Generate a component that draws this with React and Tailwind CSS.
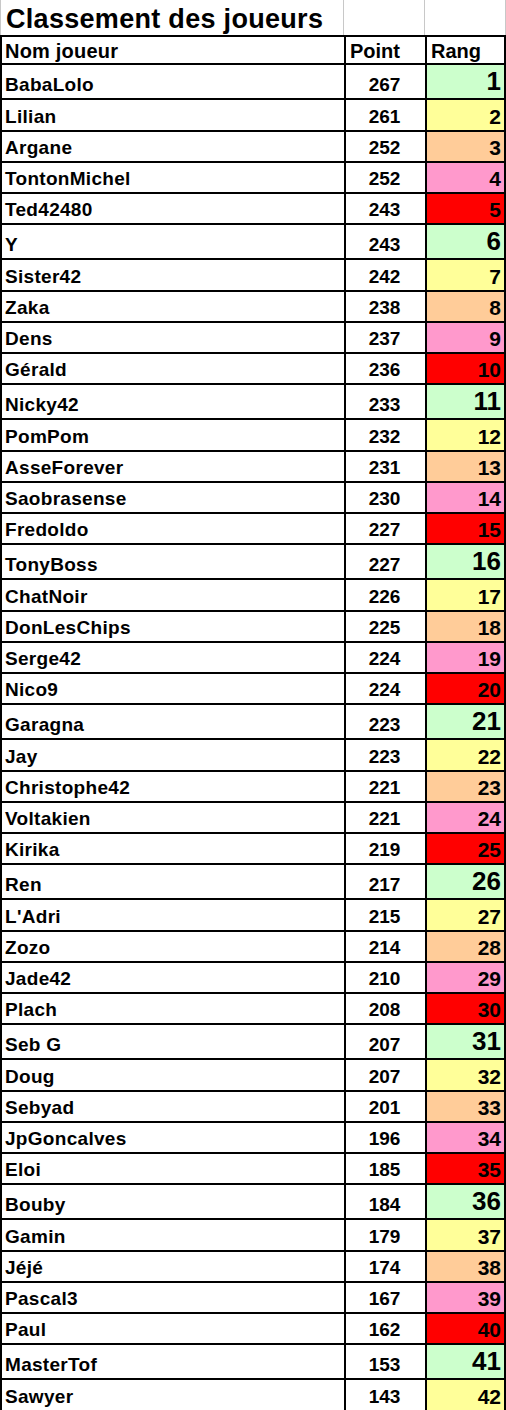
const players = [
  ["BabaLolo", 267],
  ["Lilian", 261],
  ["Argane", 252],
  ["TontonMichel", 252],
  ["Ted42480", 243],
  ["Y", 243],
  ["Sister42", 242],
  ["Zaka", 238],
  ["Dens", 237],
  ["Gérald", 236],
  ["Nicky42", 233],
  ["PomPom", 232],
  ["AsseForever", 231],
  ["Saobrasense", 230],
  ["Fredoldo", 227],
  ["TonyBoss", 227],
  ["ChatNoir", 226],
  ["DonLesChips", 225],
  ["Serge42", 224],
  ["Nico9", 224],
  ["Garagna", 223],
  ["Jay", 223],
  ["Christophe42", 221],
  ["Voltakien", 221],
  ["Kirika", 219],
  ["Ren", 217],
  ["L'Adri", 215],
  ["Zozo", 214],
  ["Jade42", 210],
  ["Plach", 208],
  ["Seb G", 207],
  ["Doug", 207],
  ["Sebyad", 201],
  ["JpGoncalves", 196],
  ["Eloi", 185],
  ["Bouby", 184],
  ["Gamin", 179],
  ["Jéjé", 174],
  ["Pascal3", 167],
  ["Paul", 162],
  ["MasterTof", 153],
  ["Sawyer", 143],
];

// one entry per position in a block of five rows
const rowHeights = ["h-[33px]", "h-[30px]", "h-[29px]", "h-[29px]", "h-[29px]"];
const rankColors = [
  "bg-[#ccffcc]",
  "bg-[#ffff99]",
  "bg-[#ffcc99]",
  "bg-[#ff99cc]",
  "bg-[#ff0000]",
];

export default function App() {
  return (
    <div
      className="w-[506px] bg-white text-black font-bold"
      style={{ fontFamily: '"Liberation Sans", Arial, sans-serif' }}
    >
      <div className="grid h-[35px] grid-cols-[344px_81px_81px]">
        <div className="flex items-end whitespace-nowrap border-l border-r border-[#c8c8c8] pb-[2px] pl-[5px] text-[27px] leading-none tracking-[0.3px]">
          Classement des joueurs
        </div>
        <div className="border-r border-[#c8c8c8]" />
        <div className="border-r border-[#c8c8c8]" />
      </div>

      <div className="grid grid-cols-[342px_79px_77px] gap-[2px] bg-black p-[2px]">
        <div className="flex h-[26px] items-end bg-white pb-[2px] pl-[3px] text-[20px] leading-none tracking-[0.2px]">
          Nom joueur
        </div>
        <div className="flex h-[26px] items-end bg-white pb-[2px] pl-[4px] text-[20px] leading-none">
          Point
        </div>
        <div className="flex h-[26px] items-end bg-white pb-[2px] pl-[4px] text-[20px] leading-none">
          Rang
        </div>

        {players.map(([name, points], index) => {
          const slot = index % 5;
          const height = rowHeights[slot];

          return [
            <div
              key={`${name}-name`}
              className={`flex ${height} items-end whitespace-nowrap bg-white pb-[4px] pl-[3px] text-[19px] leading-none tracking-[0.3px]`}
            >
              {name}
            </div>,
            <div
              key={`${name}-points`}
              className={`flex ${height} items-end justify-center bg-white pb-[4px] pr-[2px] text-[19px] leading-none`}
            >
              {points}
            </div>,
            <div
              key={`${name}-rank`}
              className={`flex ${height} items-end justify-end ${rankColors[slot]} pr-[3px] leading-none ${
                slot === 0 ? "pb-[4px] text-[26px]" : "pb-[3px] text-[21px]"
              }`}
            >
              {index + 1}
            </div>,
          ];
        })}
      </div>
    </div>
  );
}
